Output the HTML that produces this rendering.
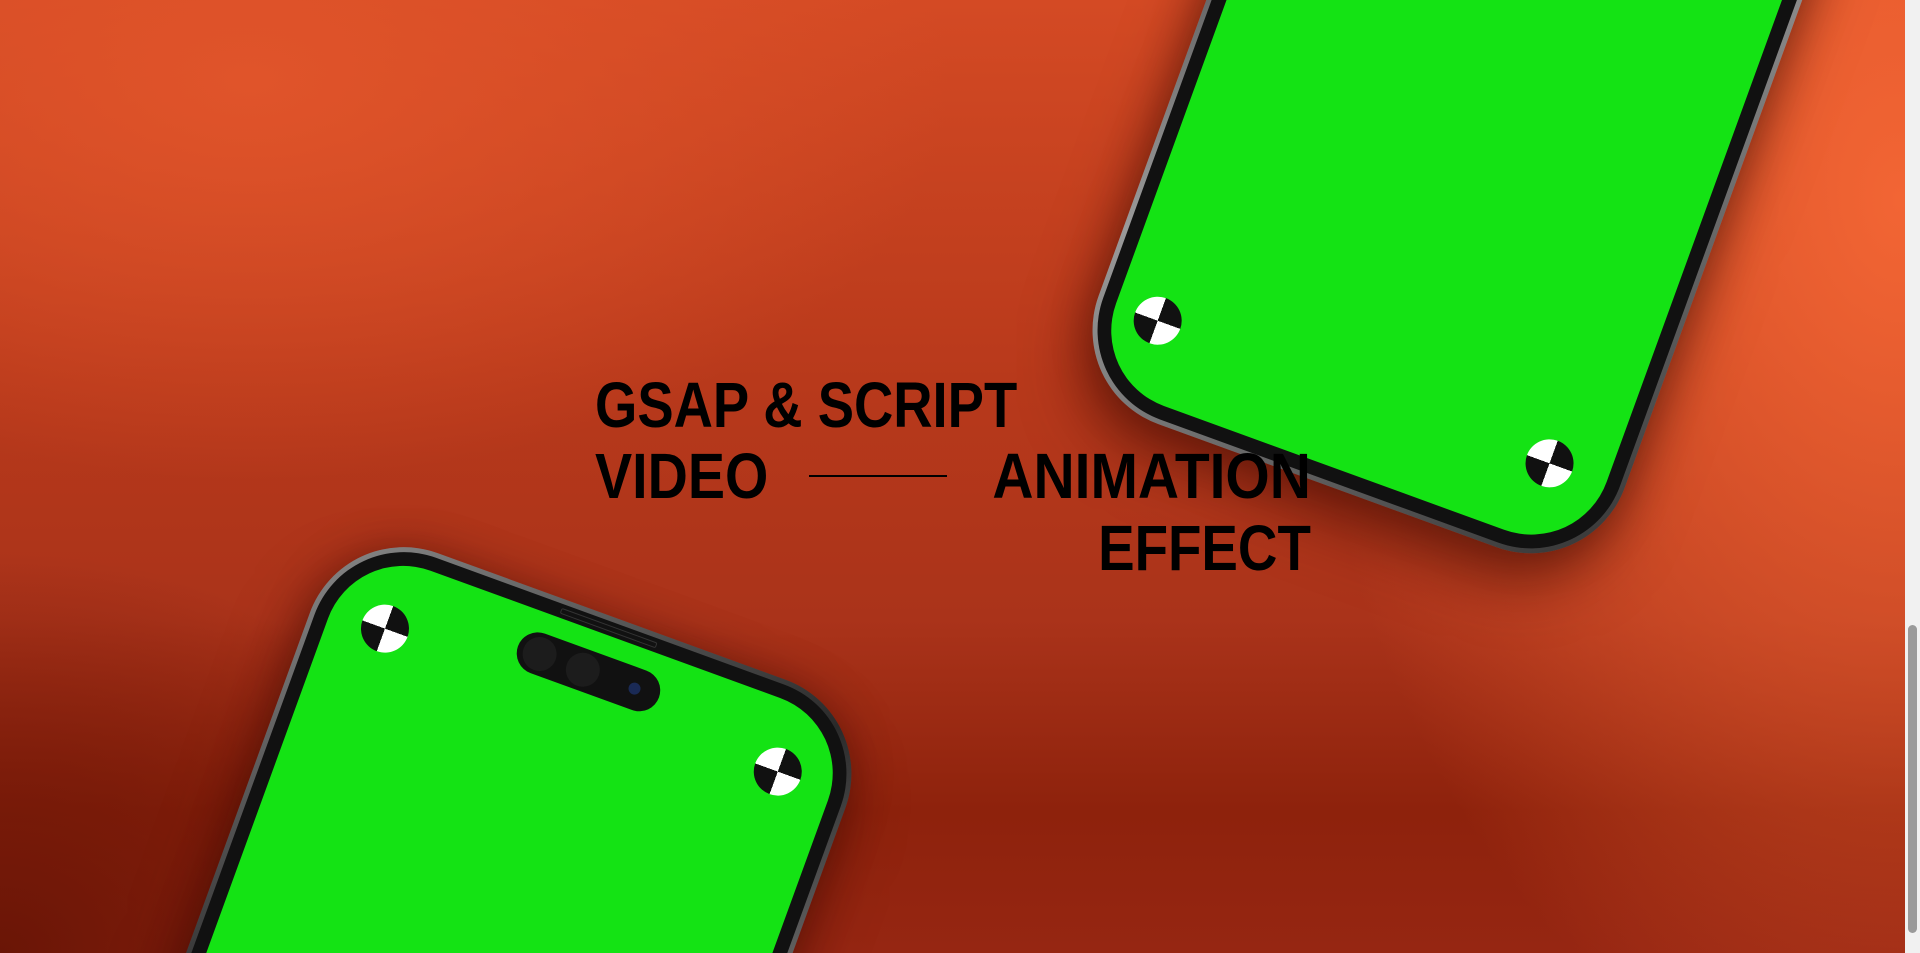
<!DOCTYPE html>
<html><head><meta charset="utf-8"><style>
html,body{margin:0;padding:0;width:1920px;height:953px;overflow:hidden}
#w{position:relative;width:1920px;height:953px;overflow:hidden;background:
radial-gradient(ellipse 600px 900px at 1900px 200px,#f26534 0%,rgba(242,101,52,0) 100%),
radial-gradient(ellipse 700px 400px at 250px 80px,#e0542a 0%,rgba(224,84,42,0) 100%),
radial-gradient(ellipse 500px 400px at 0px 953px,#6a1506 0%,rgba(106,21,6,0) 100%),
linear-gradient(180deg,#d44a24 0%,#b8391b 40%,#aa331a 65%,#8e220c 85%,#962612 100%);
font-family:"Liberation Sans",sans-serif}
.phone{position:absolute;border-radius:100px;background:linear-gradient(135deg,#8a8a8a,#2a2a2a 30%,#9a9a9a 60%,#333);padding:5px;box-sizing:border-box;box-shadow:0 30px 60px rgba(60,10,0,.55),0 0 40px rgba(60,10,0,.35)}
.bez{width:100%;height:100%;border-radius:95px;background:#111;padding:14px;box-sizing:border-box;position:relative}
.scr{width:100%;height:100%;border-radius:80px;background:#14e314;position:relative}
.mk{position:absolute;width:48px;height:48px;margin:-24px 0 0 -24px;border-radius:50%;background:conic-gradient(#111 0 90deg,#fff 90deg 180deg,#111 180deg 270deg,#fff 270deg)}
.t{position:absolute;font-weight:bold;font-size:64px;line-height:64px;color:#000;white-space:nowrap}
.sb{position:absolute;right:0;top:0;width:15px;height:953px;background:#f1f1f1}
</style></head><body><div id="w">
<div class="phone" style="left:364px;top:539px;width:570px;height:1300px;transform-origin:0 0;transform:rotate(20deg);margin:-20px 0 0 -20px">
 <div class="bez"><div class="scr">
  <div class="mk" style="left:57px;top:70px"></div>
  <div class="mk" style="left:475px;top:70px"></div>
  <div style="position:absolute;left:188px;top:20px;width:150px;height:42px;border-radius:21px;background:#111">
   <div style="position:absolute;left:6px;top:4px;width:34px;height:34px;border-radius:50%;background:#1c1c1c"></div>
   <div style="position:absolute;left:52px;top:4px;width:34px;height:34px;border-radius:50%;background:#1c1c1c"></div>
   <div style="position:absolute;left:118px;top:15px;width:12px;height:12px;border-radius:50%;background:#1a2a55"></div>
  </div>
 </div>
 <div style="position:absolute;left:230px;top:4px;width:100px;height:4px;border-radius:2px;border:1px solid #333"></div>
 </div>
</div>
<div class="phone" style="left:1070px;top:-872px;width:560px;height:1270px;transform-origin:20px 1250px;transform:rotate(20deg)">
 <div class="bez"><div class="scr">
  <div class="mk" style="left:45px;top:1154px"></div>
  <div class="mk" style="left:462px;top:1154px"></div>
 </div></div>
</div>
<div class="t" style="left:595px;top:373px;transform:scaleX(.85);transform-origin:0 0">GSAP &amp; SCRIPT</div>
<div class="t" style="left:595px;top:444px;transform:scaleX(.87);transform-origin:0 0">VIDEO</div>
<div style="position:absolute;left:809px;top:475px;width:138px;height:2px;background:#000"></div>
<div class="t" style="right:609px;top:444px;transform:scaleX(.89);transform-origin:100% 0">ANIMATION</div>
<div class="t" style="right:609px;top:516px;transform:scaleX(.855);transform-origin:100% 0">EFFECT</div>
<div class="sb"><div style="position:absolute;left:3px;top:625px;width:9px;height:308px;border-radius:5px;background:#9a9a9a"></div></div>
</div></body></html>
